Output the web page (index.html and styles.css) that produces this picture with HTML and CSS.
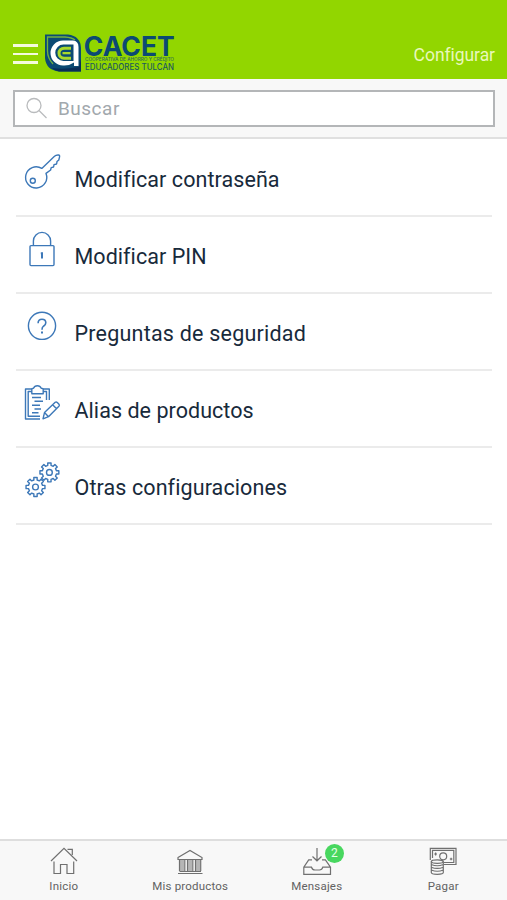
FILE: index.html
```html
<!DOCTYPE html>
<html lang="es">
<head>
<meta charset="utf-8">
<meta name="viewport" content="width=device-width, initial-scale=1">
<title>Configurar</title>
<link rel="stylesheet" href="styles.css">
</head>
<body>
<div class="app">
  <header class="topbar">
    <div class="menu"><span></span><span></span><span></span></div>
    <svg class="logo" width="131" height="40" viewBox="0 0 131 40">
      <path fill="#0b4a73" d="M0 .5H23Q35.5 2 36 14V37.5H14Q1 36 0 24Z"/>
      <path fill="#092e59" d="M36 25V37.5H14Q10 37 7 34Q18 36 34 33Z"/>
      <path fill="none" stroke="#6fb043" stroke-width="1.3" d="M8 30Q2.5 24 2.5 17V3H20Q27 3.5 30 6"/>
      <path fill="#fff" d="M18 6.5H28Q33.5 7 33.5 13V32H29V28.5Q24 32 18 31.5A12.5 12.5 0 0 1 18 6.5Z"/>
      <path fill="#0b4a73" d="M18.5 10.5H28.5V27H18.5A8.2 8.2 0 0 1 18.5 10.5Z"/>
      <path fill="#a9d82b" d="M19 12.7H26V15.7H19.5Q15.5 16 15.5 19.2Q15.5 22.5 19.5 22.7H26V25.7H19A6.5 6.5 0 0 1 19 12.7Z"/>
      <path fill="#a9d82b" d="M17.5 18H25.5V20.3H17.5Z"/>
      <text class="logo-name" x="38.8" y="21.8" textLength="91" lengthAdjust="spacingAndGlyphs">CACET</text>
      <text class="logo-tag" x="40" y="27" textLength="89" lengthAdjust="spacingAndGlyphs">COOPERATIVA DE AHORRO Y CRÉDITO</text>
      <text class="logo-sub" x="40" y="36.2" textLength="89" lengthAdjust="spacingAndGlyphs">EDUCADORES TULCÁN</text>
    </svg>
    <h1 class="title">Configurar</h1>
  </header>

  <div class="search">
    <div class="field">
      <svg width="24" height="24" viewBox="0 0 24 24"><circle cx="9" cy="8.5" r="7"/><path d="M14 13.5L21.5 21"/></svg>
      <span>Buscar</span>
    </div>
  </div>

  <main class="list">
    <div class="row">
      <svg class="icon" viewBox="0 0 40 40">
        <path d="M19.8 16.4L32.5 4.3Q34 2.8 36.5 3Q38 3.2 37.5 5.2L36.8 8L35 9.6L34.6 12L32 12.6L31.6 15L29.2 15.6L28.6 18L24 21.4A10.6 10.6 0 1 1 19.8 16.4Z"/><circle cx="10.8" cy="28.8" r="2.5"/>
      </svg>
      <span class="label l1">Modificar contraseña</span>
    </div>
    <div class="row">
      <svg class="icon" viewBox="0 0 40 40">
        <rect x="8" y="16.6" width="24" height="20" rx="1"/><path d="M11.4 16.6V12A8.6 8.6 0 0 1 28.6 12V16.6"/><path class="thick" d="M20 23.5V29.5M18.8 24.2H21"/>
      </svg>
      <span class="label l2">Modificar PIN</span>
    </div>
    <div class="row">
      <svg class="icon" viewBox="0 0 40 40">
        <circle cx="20" cy="19.8" r="13.6"/><path class="mid" d="M16.1 17.2Q16.1 13.2 20 13.2Q23.8 13.2 23.8 16.7Q23.8 18.8 21.5 20.2Q20 21.2 20 23.7"/><path class="thick" d="M20 25.6V27.4"/>
      </svg>
      <span class="label l3">Preguntas de seguridad</span>
    </div>
    <div class="row">
      <svg class="icon" viewBox="0 0 40 40">
        <path d="M10 6H3.5V36H18M10 8.5H6.2V33.2H18M21 6H27.3V17M21 8.5H24.5V17"/>
        <path d="M9.8 10.8V6.3Q9.8 5.3 11.5 5.3Q12.5 2.7 15.4 2.7Q18.2 2.7 19.2 5.3Q21.2 5.3 21.2 6.3V10.8Z"/>
        <path d="M10 14.5H19M12.5 18.3H21M10 22.2H18M12.5 26H19M10 29.8H16.5"/>
        <path d="M21 35.8L22.5 29.6L33.2 19.3Q34.2 18.5 35.3 19.5L37 21.3Q37.8 22.3 36.9 23.3L26.5 33.7ZM22.5 29.6L26.5 33.7M30.6 21.7L34.6 25.7"/>
      </svg>
      <span class="label l4">Alias de productos</span>
    </div>
    <div class="row">
      <svg class="icon" viewBox="0 0 40 40">
        <defs><path id="gear" d="M9.45-1.67V1.67L7.02 1.62L6.11 3.82L7.86 5.51L5.51 7.86L3.82 6.11L1.62 7.02L1.67 9.45H-1.67L-1.62 7.02L-3.82 6.11L-5.51 7.86L-7.86 5.51L-6.11 3.82L-7.02 1.62L-9.45 1.67V-1.67L-7.02-1.62L-6.11-3.82L-7.86-5.51L-5.51-7.86L-3.82-6.11L-1.62-7.02L-1.67-9.45H1.67L1.62-7.02L3.82-6.11L5.51-7.86L7.86-5.51L6.11-3.82L7.02-1.62Z"/></defs>
        <use href="#gear" x="27.4" y="12.4"/><circle cx="27.4" cy="12.4" r="2.9"/>
        <use href="#gear" x="13.5" y="27"/><circle cx="13.5" cy="27" r="2.9"/>
      </svg>
      <span class="label l5">Otras configuraciones</span>
    </div>
  </main>

  <nav class="tabs">
    <div class="tab">
      <svg viewBox="0 0 30 30"><path d="M2 15L15 2.3L28 15M5 15.5V27.5H11.5V18.5H18V27.5H24.7V15.5M18.5 3.3H23.3V9"/></svg>
      <span>Inicio</span>
    </div>
    <div class="tab">
      <svg viewBox="0 0 30 30"><path d="M3 11.5L15 4.5L27 11.5V13.5H3ZM3 27.5H27.5M4.5 25.5H26"/><path class="column" d="M7 14V25M15 14V25M23 14V25"/><path d="M4.5 14V25M9.8 14V25M12.5 14V25M17.8 14V25M20.5 14V25M25.7 14V25"/></svg>
      <span>Mis productos</span>
    </div>
    <div class="tab">
      <svg viewBox="0 0 30 30"><path d="M15 2V14.5M10.5 10.5L15 14.8L19.5 10.5M10 13.8H6.7L1.8 21.2V28.3H28.5V21.2L23.4 13.8H20M1.8 21.2H9.5Q10.5 24 13 24H17.5Q20 24 20.8 21.2H28.5"/></svg>
      <span>Mensajes</span>
      <b class="badge">2</b>
    </div>
    <div class="tab">
      <svg viewBox="0 0 30 30"><path d="M2.3 14V2.3H28V18.5H16M4.5 12V4.3H25.8V16.5H16"/><circle cx="15.2" cy="10.3" r="3.5"/><path d="M6.2 8H9M7.6 6.6V9.4M21.8 13H24.4M23.1 11.7V14.3"/><path d="M3.3 15.5V26.5Q3.3 28.3 9.3 28.3Q15.3 28.3 15.3 26.5V15.5M3.3 18.5Q9.3 21 15.3 18.5M3.3 21.2Q9.3 23.7 15.3 21.2M3.3 24Q9.3 26.5 15.3 24"/><ellipse cx="9.3" cy="15.6" rx="6" ry="1.8"/></svg>
      <span>Pagar</span>
    </div>
  </nav>
</div>
</body>
</html>
```
FILE: styles.css
```css
* { box-sizing: border-box; }

body {
  margin: 0;
  font-family: Roboto, "Liberation Sans", sans-serif;
  background: #fff;
}

.app {
  display: flex;
  flex-direction: column;
  height: 900px;
}

svg {
  display: block;
  flex: none;
  fill: none;
  overflow: visible;
}

.topbar {
  display: flex;
  align-items: flex-start;
  height: 79px;
  padding: 34px 12px 0 13px;
  background: #92d600;
}

.menu {
  display: flex;
  flex-direction: column;
  gap: 6px;
  width: 25px;
  margin: 10px 7px 0 0;
}

.menu span {
  height: 2.5px;
  background: #f4fbdc;
}

.logo-name { font: 700 27px Inter, sans-serif; fill: #0b4a73; }
.logo-tag { font: 500 4.6px Inter, sans-serif; fill: #2c6a55; }
.logo-sub { font: 500 8.6px Inter, sans-serif; fill: #1c5a5e; }

.title {
  margin: 10px 0 0 auto;
  font-size: 17.5px;
  line-height: 22px;
  font-weight: 400;
  letter-spacing: -0.05px;
  color: #e9f8bc;
}

.search {
  height: 60px;
  padding: 11px 12px 0 13px;
  background: #f8f8f8;
  border-bottom: 2px solid #e0e0e0;
}

.field {
  display: flex;
  align-items: center;
  height: 37px;
  padding-left: 10px;
  background: #fff;
  border: 2px solid #b4b6b8;
  color: #a2a8ad;
  font-size: 19px;
  letter-spacing: 0.5px;
}

.field svg {
  margin-right: 9px;
  stroke: #b9bbbd;
  stroke-width: 1.3;
}

.list {
  flex: 1;
  padding: 1px 15px 0 16px;
}

.row {
  display: flex;
  height: 77px;
  padding: 12px 0 0 6px;
  border-bottom: 2px solid #ebebeb;
}

.icon {
  width: 40px;
  height: 40px;
  margin-right: 12.5px;
  stroke: #3d78b8;
  stroke-width: 1.4;
  stroke-linejoin: round;
}

.thick { stroke-width: 2; }
.mid { stroke-width: 1.6; }

.label {
  margin-top: 14px;
  font-size: 21.5px;
  line-height: 28px;
  color: #182a3b;
  white-space: nowrap;
}

.l1 { letter-spacing: 0.07px; }
.l2 { letter-spacing: 0.05px; }
.l3 { letter-spacing: 0.22px; }
.l4 { letter-spacing: 0.05px; }
.l5 { letter-spacing: 0.1px; }

.tabs {
  display: grid;
  grid-template-columns: repeat(4, 126.5px);
  height: 61px;
  background: #f8f8f8;
  border-top: 2px solid #dedede;
}

.tab {
  position: relative;
  display: flex;
  flex-direction: column;
  align-items: center;
  padding: 5px 0 0 1px;
  font-size: 11.5px;
  line-height: 16px;
  letter-spacing: 0.2px;
  color: #626262;
}

.tab svg {
  width: 30px;
  height: 30px;
  margin-bottom: 2px;
  stroke: #707070;
  stroke-width: 1.2;
}

.tab .column {
  stroke: #b5b5b5;
  stroke-width: 4;
}

.badge {
  position: absolute;
  left: 72px;
  top: 3px;
  width: 19px;
  height: 19px;
  border-radius: 50%;
  background: #48d75f;
  color: #e9ffe9;
  font-size: 12px;
  font-weight: 400;
  line-height: 19px;
  text-align: center;
}
```
